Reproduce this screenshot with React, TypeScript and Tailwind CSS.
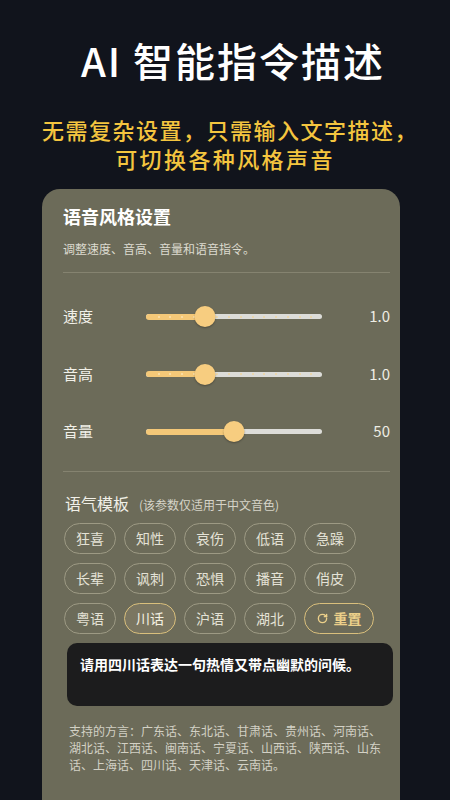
import { RotateCw } from 'lucide-react'

const font = { fontFamily: '"Noto Sans CJK SC", "Noto Sans", sans-serif' }

interface SliderRowProps {
  label: string
  value: string
  fraction: number
  ticks: number
}

function SliderRow({ label, value, fraction, ticks }: SliderRowProps) {
  const dots = Array.from({ length: ticks - 1 }, (_, i) => (i + 1) / ticks)
  return (
    <div className="flex h-[24px] items-center">
      <div className="w-[83px] text-[15px] leading-[24px] text-[#f1f0e8]">{label}</div>
      <div className="relative h-[22px] w-[176px]">
        {/* 轨道 */}
        <div className="absolute left-0 right-0 top-[9px] h-[5px] rounded-full bg-[#dcdcd8]" />
        <div
          className="absolute left-0 top-[8.5px] h-[6px] rounded-full bg-[#f4c878]"
          style={{ width: `${fraction * 100}%` }}
        />
        {dots.map((d) => (
          <div
            key={d}
            className={
              d < fraction
                ? 'absolute top-[10.5px] h-[2px] w-[2px] rounded-full bg-[#fbe2b0]'
                : 'absolute top-[10.5px] h-[2px] w-[2px] rounded-full bg-[#efd6a0]'
            }
            style={{ left: `${d * 100}%` }}
          />
        ))}
        {/* 滑块 */}
        <div
          className="absolute top-[1px] h-[21px] w-[21px] -translate-x-1/2 rounded-full bg-[#f7cd80] shadow-[0_1px_2px_rgba(0,0,0,0.3)]"
          style={{ left: `${fraction * 100}%` }}
        />
      </div>
      <div className="flex-1 text-right text-[15px] leading-[24px] text-[#eeede4]">{value}</div>
    </div>
  )
}

function Chip({ text, active }: { text: string; active?: boolean }) {
  return (
    <div
      className={
        active
          ? 'flex h-[31px] w-[52px] items-center justify-center rounded-full border-[1.5px] border-[#d9bf7c] bg-[#7b7661] text-[14px] text-[#f5f1e2]'
          : 'flex h-[31px] w-[52px] items-center justify-center rounded-full border border-[#9d9a84] text-[14px] text-[#e4e2d6]'
      }
    >
      {text}
    </div>
  )
}

const chipRows = [
  ['狂喜', '知性', '哀伤', '低语', '急躁'],
  ['长辈', '讽刺', '恐惧', '播音', '俏皮'],
  ['粤语', '川话', '沪语', '湖北'],
]

export default function App() {
  return (
    <div className="h-[800px] w-[450px] overflow-hidden bg-[#11141c]" style={font}>
      {/* 顶部标题 */}
      <div className="pl-[16px] pt-[37px] text-center text-[40px] font-medium leading-[46px] tracking-[2px] text-white">
        AI 智能指令描述
      </div>
      <div className="mt-[32px] text-center text-[22px] font-medium leading-[29px] text-[#f4c53f]">
        <div className="pl-[10px] tracking-[1.5px]">无需复杂设置，只需输入文字描述，</div>
        <div className="tracking-[2.4px]">可切换各种风格声音</div>
      </div>

      {/* 设置卡片 */}
      <div className="ml-[42px] mt-[16px] h-[640px] w-[358px] rounded-t-[18px] bg-[#6c6b59] pl-[21px] pr-[10px] pt-[15px]">
        <div className="text-[18px] font-bold leading-[24px] text-white">语音风格设置</div>
        <div className="mt-[13px] text-[12px] leading-[16px] text-[#dddbd0]">调整速度、音高、音量和语音指令。</div>
        <div className="mt-[15px] h-px bg-[#858370]" />

        <div className="mt-[31px] flex flex-col gap-[33.5px]">
          <SliderRow label="速度" value="1.0" fraction={0.335} ticks={15} />
          <SliderRow label="音高" value="1.0" fraction={0.335} ticks={15} />
          <SliderRow label="音量" value="50" fraction={0.5} ticks={1} />
        </div>

        <div className="mt-[28px] h-px bg-[#858370]" />

        <div className="mt-[20px] flex items-baseline pl-[2px]">
          <span className="text-[16px] leading-[22px] text-[#f1f0e8]">语气模板</span>
          <span className="ml-[10px] text-[12px] text-[#d6d4c8]">(该参数仅适用于中文音色)</span>
        </div>

        <div className="mt-[9px] flex flex-col gap-[9px] pl-[1px]">
          {chipRows.map((row, i) => (
            <div key={i} className="flex gap-[8px]">
              {row.map((t) => (
                <Chip key={t} text={t} active={t === '川话'} />
              ))}
              {i === 2 && (
                <div className="flex h-[31px] w-[70px] items-center justify-center gap-[6px] rounded-full border-[1.5px] border-[#d9bf7c] text-[14px] font-bold text-[#ecd08a]">
                  <RotateCw size={11} strokeWidth={3} />
                  <span>重置</span>
                </div>
              )}
            </div>
          ))}
        </div>

        <div className="ml-[4px] mr-[-3px] mt-[9px] h-[63px] rounded-[10px] bg-[#1c1c1d] px-[13px] pt-[11px] text-[14px] font-bold leading-[20px] text-white">
          请用四川话表达一句热情又带点幽默的问候。
        </div>

        <div className="mt-[16px] pl-[6px] pr-[4px] text-[12px] leading-[17px] text-[#d3d1c5]">
          支持的方言：广东话、东北话、甘肃话、贵州话、河南话、湖北话、江西话、闽南话、宁夏话、山西话、陕西话、山东话、上海话、四川话、天津话、云南话。
        </div>
      </div>
    </div>
  )
}
